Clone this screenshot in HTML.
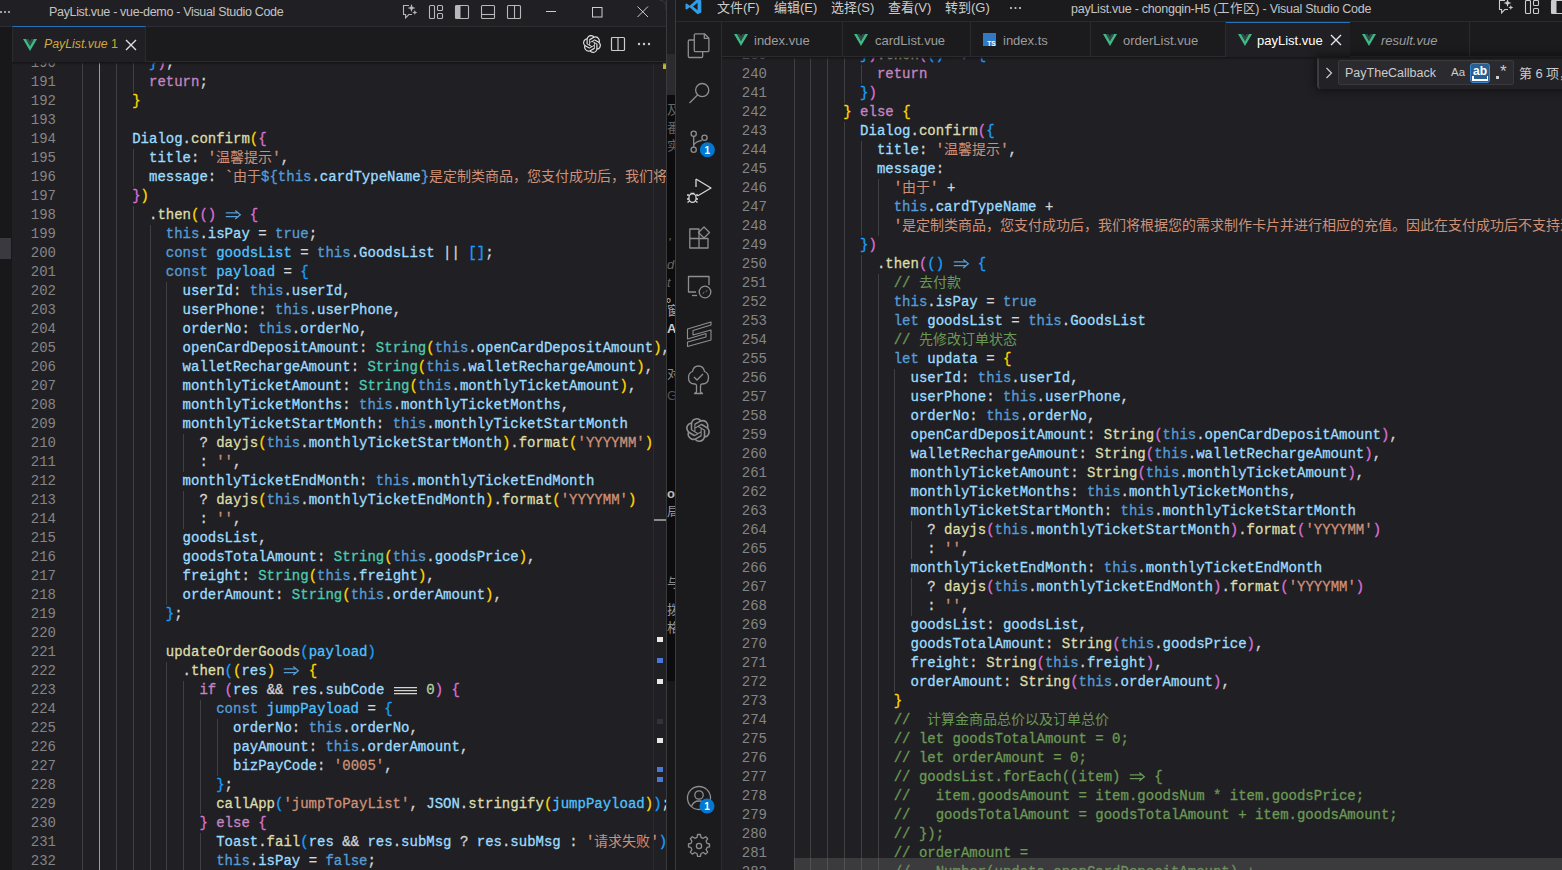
<!DOCTYPE html>
<html lang="zh-CN"><head><meta charset="utf-8">
<style>
*{box-sizing:border-box}
html,body{margin:0;padding:0}
body{width:1562px;height:870px;overflow:hidden;position:relative;background:#201f23;font-family:"Liberation Sans",sans-serif;color:#cccccc}
.a{position:absolute}
b,i{font-weight:normal;font-style:normal}
u{text-decoration:none;-webkit-text-stroke:0}
.c0{color:#179fff}
.c1{color:#da70d6}
.c2{color:#d4d4d4}
.c3{color:#c586c0}
.c4{color:#ffd700}
.c5{color:#9cdcfe}
.c6{color:#dcdcaa}
.c7{color:#ce9178}
.c8{color:#569cd6}
.c9{color:#4fc1ff}
.c10{color:#4ec9b0}
.c11{color:#b5cea8}
.c12{color:#6a9955}
.lig{display:inline-block;width:16.8px;height:19px;vertical-align:top;position:relative}
.lig svg{position:absolute;left:0;top:0}
.lig3{display:inline-block;width:25.2px;height:19px;vertical-align:top;position:relative}
.ed{position:absolute;overflow:hidden;background:#201f23}
.ln{position:absolute;left:0;width:44px;text-align:right;font-family:"Liberation Mono",monospace;font-size:14px;line-height:19px;height:19px;color:#858585;white-space:pre}
.cl{position:absolute;font-family:"Liberation Mono",monospace;font-size:14px;line-height:19px;height:19px;white-space:pre;color:#d4d4d4;-webkit-text-stroke:0.3px currentColor}
.g{position:absolute;width:1px;background:#404040}
.ga{position:absolute;width:1px;background:#b48cbb}
.tb{position:absolute;background:#1b1a1d}
.ttl{position:absolute;font-size:12px;color:#c4c4c4;white-space:nowrap}
.tab{position:absolute;font-size:13px;white-space:nowrap;color:#9d9d9d}
.sep{position:absolute;width:1px;background:#2b2a2e}
svg.i{position:absolute;overflow:visible}
.st{fill:none;stroke:#8e8e8e;stroke-width:1.2}
.stw{fill:none;stroke:#cccccc;stroke-width:1.1}
.mn{position:absolute;font-size:13px;color:#cccccc;white-space:nowrap}
</style></head><body>
<svg width="0" height="0" style="position:absolute">
 <defs>
  <symbol id="vue" viewBox="0 0 14 12"><path d="M0 0 L7 12 L14 0 H11 L7 7 L3 0 Z" fill="#41b883"/><path d="M3 0 L7 7 L11 0 H8.5 L7 2.6 L5.5 0 Z" fill="#2d4d4c"/></symbol>
  <symbol id="chat" viewBox="0 0 16 16"><path d="M7 1.5 H1.5 V10.5 H3.6 V13.8 L6.8 10.5 H10" fill="none" stroke="currentColor" stroke-width="1.1"/><path d="M9.5 0 L10.6 2.9 L13.5 4 L10.6 5.1 L9.5 8 L8.4 5.1 L5.5 4 L8.4 2.9 Z M12.8 6 L13.5 7.8 L15.3 8.5 L13.5 9.2 L12.8 11 L12.1 9.2 L10.3 8.5 L12.1 7.8 Z" fill="currentColor"/></symbol>
  <symbol id="layout" viewBox="0 0 16 16"><rect x="1.5" y="1.5" width="5" height="13" rx="1" fill="none" stroke="currentColor" stroke-width="1.1"/><rect x="9.5" y="1.5" width="5" height="5" rx="1" fill="none" stroke="currentColor" stroke-width="1.1"/><rect x="9.5" y="9.5" width="5" height="5" rx="1" fill="none" stroke="currentColor" stroke-width="1.1"/></symbol>
  <symbol id="sbl" viewBox="0 0 16 16"><rect x="1.5" y="1.5" width="13" height="13" rx="1" fill="none" stroke="currentColor" stroke-width="1.1"/><rect x="1.5" y="1.5" width="5" height="13" fill="currentColor"/></symbol>
  <symbol id="pnl" viewBox="0 0 16 16"><rect x="1.5" y="1.5" width="13" height="13" rx="1" fill="none" stroke="currentColor" stroke-width="1.1"/><path d="M1.5 10.5 H14.5" stroke="currentColor" stroke-width="1.1"/></symbol>
  <symbol id="sbr" viewBox="0 0 16 16"><rect x="1.5" y="1.5" width="13" height="13" rx="1" fill="none" stroke="currentColor" stroke-width="1.1"/><path d="M8.5 1.5 V14.5" stroke="currentColor" stroke-width="1.1"/></symbol>
  <symbol id="oai" viewBox="0 0 24 24"><path fill="currentColor" d="M22.28 9.82a5.98 5.98 0 0 0-.52-4.91 6.05 6.05 0 0 0-6.51-2.9A6.07 6.07 0 0 0 4.98 4.18a5.98 5.98 0 0 0-4 2.9 6.05 6.05 0 0 0 .74 7.1 5.98 5.98 0 0 0 .51 4.91 6.05 6.05 0 0 0 6.52 2.9A5.98 5.98 0 0 0 13.26 24a6.06 6.06 0 0 0 5.77-4.21 5.99 5.99 0 0 0 4-2.9 6.06 6.06 0 0 0-.75-7.07zM13.26 22.43a4.48 4.48 0 0 1-2.88-1.04l.14-.08 4.78-2.76a.8.8 0 0 0 .39-.68v-6.74l2.02 1.17a.07.07 0 0 1 .04.05v5.58a4.5 4.5 0 0 1-4.49 4.5zM3.6 18.3a4.47 4.47 0 0 1-.54-3.01l.14.09 4.78 2.76a.77.77 0 0 0 .78 0l5.84-3.37v2.33a.08.08 0 0 1-.03.06L9.74 19.95a4.5 4.5 0 0 1-6.14-1.65zM2.34 7.9a4.49 4.49 0 0 1 2.37-1.97v5.68a.77.77 0 0 0 .39.68l5.81 3.35-2.02 1.17a.08.08 0 0 1-.07 0l-4.83-2.79A4.5 4.5 0 0 1 2.34 7.87zm16.6 3.86-5.83-3.39L15.12 7.2a.08.08 0 0 1 .07 0l4.83 2.79a4.49 4.49 0 0 1-.68 8.1v-5.68a.79.79 0 0 0-.4-.67zm2.01-3.02-.14-.09-4.77-2.78a.78.78 0 0 0-.79 0L9.41 9.23V6.9a.07.07 0 0 1 .03-.06l4.83-2.79a4.5 4.5 0 0 1 6.68 4.66zM8.31 12.86 6.29 11.7a.08.08 0 0 1-.04-.06V6.08a4.5 4.5 0 0 1 7.38-3.45l-.14.08L8.7 5.47a.8.8 0 0 0-.39.68zm1.1-2.37 2.6-1.5 2.61 1.5v3l-2.6 1.5-2.61-1.5z"/></symbol>
 </defs>
</svg>

<!-- LEFT WINDOW -->
<div class="a" id="lw" style="left:0;top:0;width:666px;height:870px;overflow:hidden;background:#201f23;">
  <div class="tb" style="left:0;top:0;width:666px;height:27px;border-bottom:1px solid #2e2d31;background:#201f23"></div>
  <svg class="i" style="left:0;top:10px" width="12" height="4"><circle cx="1" cy="2" r="1.1" fill="#bbb"/><circle cx="5" cy="2" r="1.1" fill="#bbb"/><circle cx="9" cy="2" r="1.1" fill="#bbb"/></svg>
  <div class="ttl" style="left:49px;top:5px;font-size:12.5px;letter-spacing:-0.33px">PayList.vue - vue-demo - Visual Studio Code</div>
  <svg class="i" style="left:402px;top:4px;color:#b8b8b8" width="16" height="16"><use href="#chat"/></svg>
  <svg class="i" style="left:428px;top:4px;color:#b8b8b8" width="16" height="16"><use href="#layout"/></svg>
  <svg class="i" style="left:454px;top:4px;color:#b8b8b8" width="16" height="16"><use href="#sbl"/></svg>
  <svg class="i" style="left:480px;top:4px;color:#b8b8b8" width="16" height="16"><use href="#pnl"/></svg>
  <svg class="i" style="left:506px;top:4px;color:#b8b8b8" width="16" height="16"><use href="#sbr"/></svg>
  <svg class="i" style="left:545px;top:6px" width="12" height="12"><path d="M1 5.5 H11" stroke="#cccccc" stroke-width="1"/></svg>
  <svg class="i" style="left:591px;top:6px" width="12" height="12"><rect x="1.5" y="1.5" width="9.5" height="9.5" fill="none" stroke="#cccccc" stroke-width="1"/></svg>
  <svg class="i" style="left:637px;top:6px" width="12" height="12"><path d="M0.5 0.5 L11 11 M11 0.5 L0.5 11" stroke="#cccccc" stroke-width="1"/></svg>

  <div class="a" style="left:0;top:27px;width:12px;height:843px;background:#18171a"></div>
  <div class="a" style="left:0;top:238px;width:11px;height:21px;background:#3a393f"></div>
  <div class="tb" style="left:12px;top:27px;width:654px;height:35px;border-bottom:1px solid #2b2a2e;border-left:1px solid #2b2a2e"></div>
  <div class="a" style="left:12px;top:26px;width:134px;height:36px;background:#201f23;border-top:1px solid #2a72b5;border-right:1px solid #2b2a2e;border-left:1px solid #2b2a2e"></div>
  <svg class="i" style="left:23px;top:39px" width="14" height="12"><use href="#vue"/></svg>
  <div class="tab" style="left:44px;top:37px;font-size:12.3px;font-style:italic;color:#d0a93c">PayList.vue</div><div class="tab" style="left:111px;top:37px;font-size:12.5px;color:#cfa52e">1</div>
  <svg class="i" style="left:125px;top:39px" width="12" height="12"><path d="M1 1 L11 11 M11 1 L1 11" stroke="#e0e0e0" stroke-width="1.4"/></svg>
  <svg class="i" style="left:583px;top:35px;color:#e0e0e0" width="18" height="18"><use href="#oai"/></svg>
  <svg class="i" style="left:610px;top:36px;color:#cccccc" width="16" height="16"><rect x="1.5" y="1.5" width="13" height="13" rx="1" fill="none" stroke="currentColor" stroke-width="1.2"/><path d="M8 1.5 V14.5" stroke="currentColor" stroke-width="1.2"/></svg>
  <svg class="i" style="left:637px;top:42px" width="16" height="4"><circle cx="2" cy="2" r="1.2" fill="#ccc"/><circle cx="7" cy="2" r="1.2" fill="#ccc"/><circle cx="12" cy="2" r="1.2" fill="#ccc"/></svg>

  <div class="ed" style="left:12px;top:62px;width:654px;height:808px">
  <div class="a" style="left:0;top:0;width:654px;height:3px;background:linear-gradient(#141316,rgba(20,19,22,0));z-index:5"></div>
<div class="g" style="left:70.3px;top:-8.200000000000003px;height:836px"></div>
<div class="ga" style="left:87.1px;top:-8.200000000000003px;height:836px"></div>
<div class="g" style="left:103.9px;top:-8.200000000000003px;height:836px"></div>
<div class="g" style="left:120.7px;top:-8.200000000000003px;height:38px"></div>
<div class="g" style="left:120.7px;top:86.8px;height:38px"></div>
<div class="g" style="left:120.7px;top:143.8px;height:684px"></div>
<div class="g" style="left:137.5px;top:162.8px;height:665px"></div>
<div class="g" style="left:154.3px;top:219.8px;height:323px"></div>
<div class="g" style="left:154.3px;top:599.8px;height:228px"></div>
<div class="g" style="left:171.1px;top:371.8px;height:38px"></div>
<div class="g" style="left:171.1px;top:428.8px;height:38px"></div>
<div class="g" style="left:171.1px;top:618.8px;height:209px"></div>
<div class="g" style="left:187.9px;top:637.8px;height:114px"></div>
<div class="g" style="left:187.9px;top:770.8px;height:38px"></div>
<div class="g" style="left:204.7px;top:656.8px;height:57px"></div>
<div class="ln" style="top:-8.200000000000003px;width:44px">190</div>
<div class="cl" style="top:-8.200000000000003px;left:137.0px"><b class="c0">}</b><b class="c1">)</b><b class="c2">;</b></div>
<div class="ln" style="top:10.799999999999997px;width:44px">191</div>
<div class="cl" style="top:10.799999999999997px;left:137.0px"><b class="c3">return</b><b class="c2">;</b></div>
<div class="ln" style="top:29.799999999999997px;width:44px">192</div>
<div class="cl" style="top:29.799999999999997px;left:120.2px"><b class="c4">}</b></div>
<div class="ln" style="top:48.8px;width:44px">193</div>
<div class="cl" style="top:48.8px;left:69.8px"></div>
<div class="ln" style="top:67.8px;width:44px">194</div>
<div class="cl" style="top:67.8px;left:120.2px"><b class="c5">Dialog</b><b class="c2">.</b><b class="c6">confirm</b><b class="c4">(</b><b class="c1">{</b></div>
<div class="ln" style="top:86.8px;width:44px">195</div>
<div class="cl" style="top:86.8px;left:137.0px"><b class="c5">title</b><b class="c2">:</b> <b class="c7">&#x27;<u>温馨提示</u>&#x27;</b><b class="c2">,</b></div>
<div class="ln" style="top:105.8px;width:44px">196</div>
<div class="cl" style="top:105.8px;left:137.0px"><b class="c5">message</b><b class="c2">:</b> <b class="c7">`<u>由于</u></b><b class="c8">${</b><b class="c8">this</b><b class="c2">.</b><b class="c5">cardTypeName</b><b class="c8">}</b><b class="c7"><u>是定制类商品，您支付成功后，我们将根据您的需求制作卡片</u>`</b><b class="c2">,</b></div>
<div class="ln" style="top:124.8px;width:44px">197</div>
<div class="cl" style="top:124.8px;left:120.2px"><b class="c1">}</b><b class="c4">)</b></div>
<div class="ln" style="top:143.8px;width:44px">198</div>
<div class="cl" style="top:143.8px;left:137.0px"><b class="c2">.</b><b class="c6">then</b><b class="c4">(</b><b class="c1">(</b><b class="c1">)</b> <b class="lig"><svg width="17" height="19" style="color:#569cd6"><path d="M0.8 6.9 H12.5 M0.8 10.7 H12.5 M10.3 4.6 L15.3 8.8 L10.3 13" fill="none" stroke="currentColor" stroke-width="1.3"/></svg></b> <b class="c1">{</b></div>
<div class="ln" style="top:162.8px;width:44px">199</div>
<div class="cl" style="top:162.8px;left:153.8px"><b class="c8">this</b><b class="c2">.</b><b class="c5">isPay</b> <b class="c2">=</b> <b class="c8">true</b><b class="c2">;</b></div>
<div class="ln" style="top:181.8px;width:44px">200</div>
<div class="cl" style="top:181.8px;left:153.8px"><b class="c8">const</b> <b class="c9">goodsList</b> <b class="c2">=</b> <b class="c8">this</b><b class="c2">.</b><b class="c5">GoodsList</b> <b class="c2">|</b><b class="c2">|</b> <b class="c0">[</b><b class="c0">]</b><b class="c2">;</b></div>
<div class="ln" style="top:200.8px;width:44px">201</div>
<div class="cl" style="top:200.8px;left:153.8px"><b class="c8">const</b> <b class="c9">payload</b> <b class="c2">=</b> <b class="c0">{</b></div>
<div class="ln" style="top:219.8px;width:44px">202</div>
<div class="cl" style="top:219.8px;left:170.6px"><b class="c5">userId</b><b class="c2">:</b> <b class="c8">this</b><b class="c2">.</b><b class="c5">userId</b><b class="c2">,</b></div>
<div class="ln" style="top:238.8px;width:44px">203</div>
<div class="cl" style="top:238.8px;left:170.6px"><b class="c5">userPhone</b><b class="c2">:</b> <b class="c8">this</b><b class="c2">.</b><b class="c5">userPhone</b><b class="c2">,</b></div>
<div class="ln" style="top:257.8px;width:44px">204</div>
<div class="cl" style="top:257.8px;left:170.6px"><b class="c5">orderNo</b><b class="c2">:</b> <b class="c8">this</b><b class="c2">.</b><b class="c5">orderNo</b><b class="c2">,</b></div>
<div class="ln" style="top:276.8px;width:44px">205</div>
<div class="cl" style="top:276.8px;left:170.6px"><b class="c5">openCardDepositAmount</b><b class="c2">:</b> <b class="c10">String</b><b class="c4">(</b><b class="c8">this</b><b class="c2">.</b><b class="c5">openCardDepositAmount</b><b class="c4">)</b><b class="c2">,</b></div>
<div class="ln" style="top:295.8px;width:44px">206</div>
<div class="cl" style="top:295.8px;left:170.6px"><b class="c5">walletRechargeAmount</b><b class="c2">:</b> <b class="c10">String</b><b class="c4">(</b><b class="c8">this</b><b class="c2">.</b><b class="c5">walletRechargeAmount</b><b class="c4">)</b><b class="c2">,</b></div>
<div class="ln" style="top:314.8px;width:44px">207</div>
<div class="cl" style="top:314.8px;left:170.6px"><b class="c5">monthlyTicketAmount</b><b class="c2">:</b> <b class="c10">String</b><b class="c4">(</b><b class="c8">this</b><b class="c2">.</b><b class="c5">monthlyTicketAmount</b><b class="c4">)</b><b class="c2">,</b></div>
<div class="ln" style="top:333.8px;width:44px">208</div>
<div class="cl" style="top:333.8px;left:170.6px"><b class="c5">monthlyTicketMonths</b><b class="c2">:</b> <b class="c8">this</b><b class="c2">.</b><b class="c5">monthlyTicketMonths</b><b class="c2">,</b></div>
<div class="ln" style="top:352.8px;width:44px">209</div>
<div class="cl" style="top:352.8px;left:170.6px"><b class="c5">monthlyTicketStartMonth</b><b class="c2">:</b> <b class="c8">this</b><b class="c2">.</b><b class="c5">monthlyTicketStartMonth</b></div>
<div class="ln" style="top:371.8px;width:44px">210</div>
<div class="cl" style="top:371.8px;left:187.4px"><b class="c2">?</b> <b class="c6">dayjs</b><b class="c4">(</b><b class="c8">this</b><b class="c2">.</b><b class="c5">monthlyTicketStartMonth</b><b class="c4">)</b><b class="c2">.</b><b class="c6">format</b><b class="c4">(</b><b class="c7">&#x27;YYYYMM&#x27;</b><b class="c4">)</b></div>
<div class="ln" style="top:390.8px;width:44px">211</div>
<div class="cl" style="top:390.8px;left:187.4px"><b class="c2">:</b> <b class="c7">&#x27;&#x27;</b><b class="c2">,</b></div>
<div class="ln" style="top:409.8px;width:44px">212</div>
<div class="cl" style="top:409.8px;left:170.6px"><b class="c5">monthlyTicketEndMonth</b><b class="c2">:</b> <b class="c8">this</b><b class="c2">.</b><b class="c5">monthlyTicketEndMonth</b></div>
<div class="ln" style="top:428.8px;width:44px">213</div>
<div class="cl" style="top:428.8px;left:187.4px"><b class="c2">?</b> <b class="c6">dayjs</b><b class="c4">(</b><b class="c8">this</b><b class="c2">.</b><b class="c5">monthlyTicketEndMonth</b><b class="c4">)</b><b class="c2">.</b><b class="c6">format</b><b class="c4">(</b><b class="c7">&#x27;YYYYMM&#x27;</b><b class="c4">)</b></div>
<div class="ln" style="top:447.8px;width:44px">214</div>
<div class="cl" style="top:447.8px;left:187.4px"><b class="c2">:</b> <b class="c7">&#x27;&#x27;</b><b class="c2">,</b></div>
<div class="ln" style="top:466.8px;width:44px">215</div>
<div class="cl" style="top:466.8px;left:170.6px"><b class="c5">goodsList</b><b class="c2">,</b></div>
<div class="ln" style="top:485.8px;width:44px">216</div>
<div class="cl" style="top:485.8px;left:170.6px"><b class="c5">goodsTotalAmount</b><b class="c2">:</b> <b class="c10">String</b><b class="c4">(</b><b class="c8">this</b><b class="c2">.</b><b class="c5">goodsPrice</b><b class="c4">)</b><b class="c2">,</b></div>
<div class="ln" style="top:504.8px;width:44px">217</div>
<div class="cl" style="top:504.8px;left:170.6px"><b class="c5">freight</b><b class="c2">:</b> <b class="c10">String</b><b class="c4">(</b><b class="c8">this</b><b class="c2">.</b><b class="c5">freight</b><b class="c4">)</b><b class="c2">,</b></div>
<div class="ln" style="top:523.8px;width:44px">218</div>
<div class="cl" style="top:523.8px;left:170.6px"><b class="c5">orderAmount</b><b class="c2">:</b> <b class="c10">String</b><b class="c4">(</b><b class="c8">this</b><b class="c2">.</b><b class="c5">orderAmount</b><b class="c4">)</b><b class="c2">,</b></div>
<div class="ln" style="top:542.8px;width:44px">219</div>
<div class="cl" style="top:542.8px;left:153.8px"><b class="c0">}</b><b class="c2">;</b></div>
<div class="ln" style="top:561.8px;width:44px">220</div>
<div class="cl" style="top:561.8px;left:69.8px"></div>
<div class="ln" style="top:580.8px;width:44px">221</div>
<div class="cl" style="top:580.8px;left:153.8px"><b class="c6">updateOrderGoods</b><b class="c0">(</b><b class="c9">payload</b><b class="c0">)</b></div>
<div class="ln" style="top:599.8px;width:44px">222</div>
<div class="cl" style="top:599.8px;left:170.6px"><b class="c2">.</b><b class="c6">then</b><b class="c0">(</b><b class="c4">(</b><b class="c5">res</b><b class="c4">)</b> <b class="lig"><svg width="17" height="19" style="color:#569cd6"><path d="M0.8 6.9 H12.5 M0.8 10.7 H12.5 M10.3 4.6 L15.3 8.8 L10.3 13" fill="none" stroke="currentColor" stroke-width="1.3"/></svg></b> <b class="c4">{</b></div>
<div class="ln" style="top:618.8px;width:44px">223</div>
<div class="cl" style="top:618.8px;left:187.4px"><b class="c3">if</b> <b class="c1">(</b><b class="c5">res</b> <b class="c2">&amp;</b><b class="c2">&amp;</b> <b class="c5">res</b><b class="c2">.</b><b class="c5">subCode</b> <b class="lig3"><svg width="26" height="19"><path d="M1 6.7 H24 M1 9.7 H24 M1 12.7 H24" fill="none" stroke="#d4d4d4" stroke-width="1.2"/></svg></b> <b class="c11">0</b><b class="c1">)</b> <b class="c1">{</b></div>
<div class="ln" style="top:637.8px;width:44px">224</div>
<div class="cl" style="top:637.8px;left:204.2px"><b class="c8">const</b> <b class="c9">jumpPayload</b> <b class="c2">=</b> <b class="c0">{</b></div>
<div class="ln" style="top:656.8px;width:44px">225</div>
<div class="cl" style="top:656.8px;left:221.0px"><b class="c5">orderNo</b><b class="c2">:</b> <b class="c8">this</b><b class="c2">.</b><b class="c5">orderNo</b><b class="c2">,</b></div>
<div class="ln" style="top:675.8px;width:44px">226</div>
<div class="cl" style="top:675.8px;left:221.0px"><b class="c5">payAmount</b><b class="c2">:</b> <b class="c8">this</b><b class="c2">.</b><b class="c5">orderAmount</b><b class="c2">,</b></div>
<div class="ln" style="top:694.8px;width:44px">227</div>
<div class="cl" style="top:694.8px;left:221.0px"><b class="c5">bizPayCode</b><b class="c2">:</b> <b class="c7">&#x27;0005&#x27;</b><b class="c2">,</b></div>
<div class="ln" style="top:713.8px;width:44px">228</div>
<div class="cl" style="top:713.8px;left:204.2px"><b class="c0">}</b><b class="c2">;</b></div>
<div class="ln" style="top:732.8px;width:44px">229</div>
<div class="cl" style="top:732.8px;left:204.2px"><b class="c6">callApp</b><b class="c0">(</b><b class="c7">&#x27;jumpToPayList&#x27;</b><b class="c2">,</b> <b class="c5">JSON</b><b class="c2">.</b><b class="c6">stringify</b><b class="c4">(</b><b class="c9">jumpPayload</b><b class="c4">)</b><b class="c0">)</b><b class="c2">;</b></div>
<div class="ln" style="top:751.8px;width:44px">230</div>
<div class="cl" style="top:751.8px;left:187.4px"><b class="c1">}</b> <b class="c3">else</b> <b class="c1">{</b></div>
<div class="ln" style="top:770.8px;width:44px">231</div>
<div class="cl" style="top:770.8px;left:204.2px"><b class="c5">Toast</b><b class="c2">.</b><b class="c6">fail</b><b class="c0">(</b><b class="c5">res</b> <b class="c2">&amp;</b><b class="c2">&amp;</b> <b class="c5">res</b><b class="c2">.</b><b class="c5">subMsg</b> <b class="c2">?</b> <b class="c5">res</b><b class="c2">.</b><b class="c5">subMsg</b> <b class="c2">:</b> <b class="c7">&#x27;<u>请求失败</u>&#x27;</b><b class="c0">)</b><b class="c2">;</b></div>
<div class="ln" style="top:789.8px;width:44px">232</div>
<div class="cl" style="top:789.8px;left:204.2px"><b class="c8">this</b><b class="c2">.</b><b class="c5">isPay</b> <b class="c2">=</b> <b class="c8">false</b><b class="c2">;</b></div>
<div class="ln" style="top:808.8px;width:44px">233</div>
<div class="cl" style="top:808.8px;left:187.4px"><b class="c1">}</b></div>
  <div class="a" style="left:641px;top:0;width:1px;height:808px;background:#2b2a2e"></div>
  <div class="a" style="left:651px;top:1px;width:3px;height:6px;background:#c8b321"></div>
  <div class="a" style="left:642px;top:457px;width:12px;height:2px;background:#8a8a8a"></div>
  <div class="a" style="left:645px;top:575px;width:6px;height:5px;background:#e8e8e8"></div>
  <div class="a" style="left:645px;top:596px;width:6px;height:5px;background:#4a78d8"></div>
  <div class="a" style="left:645px;top:617px;width:6px;height:5px;background:#e8e8e8"></div>
  <div class="a" style="left:645px;top:657px;width:6px;height:5px;background:#333236"></div>
  <div class="a" style="left:645px;top:676px;width:6px;height:5px;background:#e8e8e8"></div>
  <div class="a" style="left:645px;top:705px;width:6px;height:5px;background:#4a78d8"></div>
  <div class="a" style="left:645px;top:715px;width:6px;height:5px;background:#4a78d8"></div>
  </div>
</div>

<!-- STRIP -->
<svg class="i" style="left:655px;top:0" width="12" height="10"><path d="M5 0.5 Q11 0.5 11 6 V10" fill="none" stroke="#3a393c" stroke-width="1"/></svg>
<div class="a" style="left:666px;top:0;width:10px;height:870px;background:#0c0b0d;border-left:1px solid #3a393c;border-right:1px solid #3a393c"></div>
<div class="a" style="left:667px;top:0;width:8px;height:54px;background:#1e1d21"></div>
<div class="a" style="left:667px;top:54px;width:8px;height:41px;background:#2b2a2e"></div>
<div class="a" style="left:667px;top:681px;width:8px;height:189px;background:#18171a"></div>
<div class="a" style="left:667px;top:95px;width:8px;height:586px;overflow:hidden;font-size:13px;line-height:18px;color:#666">
 <div class="a" style="left:0;top:6px">及</div><div class="a" style="left:0;top:24px">番</div><div class="a" style="left:0;top:42px">实</div>
 <div class="a" style="left:1px;top:139px;font-style:italic;color:#666">'</div><div class="a" style="left:0;top:161px;font-style:italic;color:#666">d</div><div class="a" style="left:0;top:179px;font-style:italic;color:#666">t</div>
 <div class="a" style="left:-1px;top:193px;color:#ccc">。</div><div class="a" style="left:0;top:207px;color:#aaa">窗</div><div class="a" style="left:0;top:225px;color:#ccc;font-weight:bold">A</div>
 <div class="a" style="left:0;top:270px;color:#888">对</div><div class="a" style="left:0;top:292px;color:#555">G</div>
 <div class="a" style="left:0;top:390px;color:#bbb;font-weight:bold">o</div><div class="a" style="left:0;top:408px;color:#999">局</div>
 <div class="a" style="left:0;top:479px;color:#888">与</div><div class="a" style="left:0;top:506px;color:#999">拨</div><div class="a" style="left:0;top:524px;color:#999">格</div>
</div>

<!-- RIGHT WINDOW -->
<div class="a" id="rw" style="left:676px;top:0;width:886px;height:870px;overflow:hidden;background:#201f23">
  <div class="tb" style="left:0;top:0;width:886px;height:22px;border-bottom:1px solid #2b2a2e"></div>
  <svg class="i" style="left:9px;top:-2px" width="17" height="17" viewBox="0 0 100 100"><path d="M74 4 L96 15 V85 L74 96 L28 54 L10 68 L3 64 V36 L10 32 L28 46 Z M74 28 L47 50 L74 72 Z" fill="#2e9ee8"/></svg>
  <div class="mn" style="left:41px;top:-3px">文件(F)</div>
  <div class="mn" style="left:98px;top:-3px">编辑(E)</div>
  <div class="mn" style="left:155px;top:-3px">选择(S)</div>
  <div class="mn" style="left:212px;top:-3px">查看(V)</div>
  <div class="mn" style="left:269px;top:-3px">转到(G)</div>
  <svg class="i" style="left:333px;top:6px" width="16" height="4"><circle cx="2" cy="2" r="1.1" fill="#ccc"/><circle cx="6.5" cy="2" r="1.1" fill="#ccc"/><circle cx="11" cy="2" r="1.1" fill="#ccc"/></svg>
  <div class="ttl" style="left:395px;top:-2px;font-size:12.5px;letter-spacing:-0.25px">payList.vue - chongqin-H5 (工作区) - Visual Studio Code</div>
  <svg class="i" style="left:822px;top:-1px;color:#cccccc" width="16" height="16"><use href="#chat"/></svg>
  <svg class="i" style="left:848px;top:-1px;color:#cccccc" width="16" height="16"><use href="#layout"/></svg>
  <svg class="i" style="left:874px;top:-1px;color:#cccccc" width="16" height="16"><use href="#sbl"/></svg>

  <div class="tb" style="left:0;top:22px;width:46px;height:848px;border-right:1px solid #2b2a2e"></div>
    <svg class="i" style="left:0;top:0" width="46" height="870">
   <g fill="none" stroke="#8e8e8e" stroke-width="1.3" stroke-linejoin="round">
    <!-- explorer -->
    <path d="M18 40 H13.5 Q12.3 40 12.3 41.2 V56.3 Q12.3 57.5 13.5 57.5 H25.5 Q26.7 57.5 26.7 56.3 V51.6"/>
    <path d="M19.5 33.8 H28.5 L32.9 38.2 V50.4 Q32.9 51.6 31.7 51.6 H19.5 Q18.3 51.6 18.3 50.4 V35 Q18.3 33.8 19.5 33.8 Z"/>
    <path d="M28.3 34 V38.3 H32.7"/>
    <!-- search -->
    <circle cx="26.2" cy="90.1" r="6.6"/>
    <path d="M21.5 95 L13.5 103"/>
    <!-- scm -->
    <circle cx="17.7" cy="133.7" r="2.6"/>
    <circle cx="17.7" cy="149.8" r="2.6"/>
    <circle cx="28.5" cy="137.7" r="2.6"/>
    <path d="M17.7 136.3 V147.2 M17.7 145 Q20 141.5 25.9 140.4"/>
    <!-- extensions -->
    <path d="M13.8 229 H23 V248 H13.8 Z M13.8 238.5 H32 V248 H23"/>
    <path d="M28 227 L33.5 232.5 L28 238 L22.5 232.5 Z"/>
    <!-- remote -->
    <path d="M20 292 H12.5 V276.5 H33 V285"/>
    <path d="M16 295.5 H21"/>
    <circle cx="29" cy="292" r="5.8"/>
    <path d="M26.7 293.5 L28.3 292.3 M31.3 290.5 L29.7 291.7" stroke-width="1"/>
    <!-- S -->
    <path d="M11.5 329 L35 322 V325 L17 330.5 V335 L35 330 V340 L11.5 346.5 V342 L30 337 V333.5 L11.5 339 Z" stroke-width="1.1"/>
    <!-- tree -->
    <path d="M19 384 Q12.5 384 12.5 377.5 Q12.5 373 16.5 371.5 Q17.5 366 22.5 366 Q27.5 366 28.5 371.5 Q32.5 373 32.5 377.5 Q32.5 384 26 384 Q24.5 384 24.5 386 V392 L26.5 393.5 H18.5 L20.5 392 V386 Q20.5 384 19 384 Z"/>
    <path d="M18 377 L21 380 L27 374"/>
    <!-- account -->
    <circle cx="23" cy="798" r="11.5"/>
    <circle cx="23" cy="795" r="4.2"/>
    <path d="M15.5 806.5 Q17.5 801 23 801 Q28.5 801 30.5 806.5"/>
    <!-- gear -->
    <circle cx="23" cy="846" r="2.6"/>
    <path d="M21.6 834.5 H24.4 L25 837.3 L27.2 838.3 L29.7 836.7 L31.7 838.7 L30.1 841.2 L31.1 843.4 L33.5 844 V846.8 L31.1 847.4 L30.1 849.6 L31.7 852.1 L29.7 854.1 L27.2 852.5 L25 853.5 L24.4 856.3 H21.6 L21 853.5 L18.8 852.5 L16.3 854.1 L14.3 852.1 L15.9 849.6 L14.9 847.4 L12.5 846.8 V844 L14.9 843.4 L15.9 841.2 L14.3 838.7 L16.3 836.7 L18.8 838.3 L21 837.3 Z"/>
   </g>
   <!-- debug -->
   <g fill="none" stroke="#d8d8d8" stroke-width="1.3" stroke-linejoin="round">
    <path d="M20 179 L35 188 L21.5 196"/>
    <path d="M20 179 V187"/>
    <ellipse cx="16.5" cy="198" rx="3.6" ry="4.4"/>
    <path d="M11 195 H13 M20 195 H22 M11 199 H13 M20 199 H22 M11.5 202.5 L13.5 201 M21.5 202.5 L19.5 201 M14.5 193.5 H18.5"/>
   </g>
   <g transform="translate(10 418) scale(1)" style="color:#8e8e8e"><use href="#oai" width="24" height="24"/></g>
   <!-- badges -->
   <circle cx="31.4" cy="149.8" r="7.5" fill="#0078d4"/>
   <text x="31.4" y="153.6" font-size="10" font-weight="bold" fill="#fff" text-anchor="middle" font-family="Liberation Sans">1</text>
   <circle cx="31" cy="806" r="7.5" fill="#0078d4"/>
   <text x="31" y="809.8" font-size="10" font-weight="bold" fill="#fff" text-anchor="middle" font-family="Liberation Sans">1</text>
  </svg>

  <div class="tb" style="left:46px;top:22px;width:840px;height:35px;border-bottom:1px solid #2b2a2e"></div>
    <div class="sep" style="left:166px;top:22px;height:34px"></div>
  <div class="sep" style="left:294px;top:22px;height:34px"></div>
  <div class="sep" style="left:414px;top:22px;height:34px"></div>
  <div class="sep" style="left:549px;top:22px;height:34px"></div>
  <div class="sep" style="left:673px;top:22px;height:34px"></div>
  <div class="sep" style="left:793px;top:22px;height:34px"></div>
  <div class="a" style="left:550px;top:22px;width:124px;height:36px;background:#201f23;border-top:1px solid #2a72b5"></div>
  <svg class="i" style="left:58px;top:34px" width="14" height="12"><use href="#vue"/></svg>
  <div class="tab" style="left:78px;top:33px">index.vue</div>
  <svg class="i" style="left:178px;top:34px" width="14" height="12"><use href="#vue"/></svg>
  <div class="tab" style="left:199px;top:33px">cardList.vue</div>
  <div class="a" style="left:307px;top:33px;width:13px;height:13px;background:#3178c6"><span style="position:absolute;right:0.5px;bottom:-1px;font-size:6.5px;font-weight:bold;color:#fff;font-family:'Liberation Sans'">TS</span></div>
  <div class="tab" style="left:327px;top:33px">index.ts</div>
  <svg class="i" style="left:427px;top:34px" width="14" height="12"><use href="#vue"/></svg>
  <div class="tab" style="left:447px;top:33px">orderList.vue</div>
  <svg class="i" style="left:562px;top:34px" width="14" height="12"><use href="#vue"/></svg>
  <div class="tab" style="left:581px;top:33px;color:#ffffff">payList.vue</div>
  <svg class="i" style="left:654px;top:34px" width="12" height="12"><path d="M1 1 L11 11 M11 1 L1 11" stroke="#e8e8e8" stroke-width="1.4"/></svg>
  <svg class="i" style="left:686px;top:34px" width="14" height="12"><use href="#vue"/></svg>
  <div class="tab" style="left:705px;top:33px;font-style:italic">result.vue</div>

  <div class="ed" style="left:46px;top:57px;width:840px;height:813px">
  <div class="a" style="left:0;top:0;width:840px;height:3px;background:linear-gradient(#141316,rgba(20,19,22,0));z-index:5"></div>
<div class="g" style="left:71.6px;top:-11.100000000000001px;height:836px"></div>
<div class="g" style="left:88.4px;top:-11.100000000000001px;height:836px"></div>
<div class="g" style="left:105.2px;top:-11.100000000000001px;height:836px"></div>
<div class="g" style="left:122.0px;top:-11.100000000000001px;height:57px"></div>
<div class="g" style="left:122.0px;top:64.9px;height:760px"></div>
<div class="g" style="left:138.8px;top:7.899999999999999px;height:19px"></div>
<div class="g" style="left:138.8px;top:83.9px;height:95px"></div>
<div class="g" style="left:138.8px;top:197.9px;height:627px"></div>
<div class="g" style="left:155.6px;top:121.9px;height:57px"></div>
<div class="g" style="left:155.6px;top:216.9px;height:608px"></div>
<div class="g" style="left:172.4px;top:311.9px;height:323px"></div>
<div class="g" style="left:189.2px;top:463.9px;height:38px"></div>
<div class="g" style="left:189.2px;top:520.9px;height:38px"></div>
<div class="ln" style="top:-11.100000000000001px;width:45px">239</div>
<div class="cl" style="top:-11.100000000000001px;left:138.1px"><b class="c0">}</b><b class="c1">)</b><b class="c2">.</b><b class="c6">then</b><b class="c1">(</b><b class="c0">(</b><b class="c0">)</b> <b class="lig"><svg width="17" height="19" style="color:#569cd6"><path d="M0.8 6.9 H12.5 M0.8 10.7 H12.5 M10.3 4.6 L15.3 8.8 L10.3 13" fill="none" stroke="currentColor" stroke-width="1.3"/></svg></b> <b class="c0">{</b></div>
<div class="ln" style="top:7.899999999999999px;width:45px">240</div>
<div class="cl" style="top:7.899999999999999px;left:154.9px"><b class="c3">return</b></div>
<div class="ln" style="top:26.9px;width:45px">241</div>
<div class="cl" style="top:26.9px;left:138.1px"><b class="c0">}</b><b class="c1">)</b></div>
<div class="ln" style="top:45.9px;width:45px">242</div>
<div class="cl" style="top:45.9px;left:121.3px"><b class="c4">}</b> <b class="c3">else</b> <b class="c4">{</b></div>
<div class="ln" style="top:64.9px;width:45px">243</div>
<div class="cl" style="top:64.9px;left:138.1px"><b class="c5">Dialog</b><b class="c2">.</b><b class="c6">confirm</b><b class="c1">(</b><b class="c0">{</b></div>
<div class="ln" style="top:83.9px;width:45px">244</div>
<div class="cl" style="top:83.9px;left:154.9px"><b class="c5">title</b><b class="c2">:</b> <b class="c7">&#x27;<u>温馨提示</u>&#x27;</b><b class="c2">,</b></div>
<div class="ln" style="top:102.9px;width:45px">245</div>
<div class="cl" style="top:102.9px;left:154.9px"><b class="c5">message</b><b class="c2">:</b></div>
<div class="ln" style="top:121.9px;width:45px">246</div>
<div class="cl" style="top:121.9px;left:171.7px"><b class="c7">&#x27;<u>由于</u>&#x27;</b> <b class="c2">+</b></div>
<div class="ln" style="top:140.9px;width:45px">247</div>
<div class="cl" style="top:140.9px;left:171.7px"><b class="c8">this</b><b class="c2">.</b><b class="c5">cardTypeName</b> <b class="c2">+</b></div>
<div class="ln" style="top:159.9px;width:45px">248</div>
<div class="cl" style="top:159.9px;left:171.7px"><b class="c7">&#x27;<u>是定制类商品，您支付成功后，我们将根据您的需求制作卡片并进行相应的充值。因此在支付成功后不支持退款</u>&#x27;</b><b class="c2">,</b></div>
<div class="ln" style="top:178.9px;width:45px">249</div>
<div class="cl" style="top:178.9px;left:138.1px"><b class="c0">}</b><b class="c1">)</b></div>
<div class="ln" style="top:197.9px;width:45px">250</div>
<div class="cl" style="top:197.9px;left:154.9px"><b class="c2">.</b><b class="c6">then</b><b class="c1">(</b><b class="c0">(</b><b class="c0">)</b> <b class="lig"><svg width="17" height="19" style="color:#569cd6"><path d="M0.8 6.9 H12.5 M0.8 10.7 H12.5 M10.3 4.6 L15.3 8.8 L10.3 13" fill="none" stroke="currentColor" stroke-width="1.3"/></svg></b> <b class="c0">{</b></div>
<div class="ln" style="top:216.9px;width:45px">251</div>
<div class="cl" style="top:216.9px;left:171.7px"><b class="c12">// <u>去付款</u></b></div>
<div class="ln" style="top:235.9px;width:45px">252</div>
<div class="cl" style="top:235.9px;left:171.7px"><b class="c8">this</b><b class="c2">.</b><b class="c5">isPay</b> <b class="c2">=</b> <b class="c8">true</b></div>
<div class="ln" style="top:254.9px;width:45px">253</div>
<div class="cl" style="top:254.9px;left:171.7px"><b class="c8">let</b> <b class="c5">goodsList</b> <b class="c2">=</b> <b class="c8">this</b><b class="c2">.</b><b class="c5">GoodsList</b></div>
<div class="ln" style="top:273.9px;width:45px">254</div>
<div class="cl" style="top:273.9px;left:171.7px"><b class="c12">// <u>先修改订单状态</u></b></div>
<div class="ln" style="top:292.9px;width:45px">255</div>
<div class="cl" style="top:292.9px;left:171.7px"><b class="c8">let</b> <b class="c5">updata</b> <b class="c2">=</b> <b class="c4">{</b></div>
<div class="ln" style="top:311.9px;width:45px">256</div>
<div class="cl" style="top:311.9px;left:188.5px"><b class="c5">userId</b><b class="c2">:</b> <b class="c8">this</b><b class="c2">.</b><b class="c5">userId</b><b class="c2">,</b></div>
<div class="ln" style="top:330.9px;width:45px">257</div>
<div class="cl" style="top:330.9px;left:188.5px"><b class="c5">userPhone</b><b class="c2">:</b> <b class="c8">this</b><b class="c2">.</b><b class="c5">userPhone</b><b class="c2">,</b></div>
<div class="ln" style="top:349.9px;width:45px">258</div>
<div class="cl" style="top:349.9px;left:188.5px"><b class="c5">orderNo</b><b class="c2">:</b> <b class="c8">this</b><b class="c2">.</b><b class="c5">orderNo</b><b class="c2">,</b></div>
<div class="ln" style="top:368.9px;width:45px">259</div>
<div class="cl" style="top:368.9px;left:188.5px"><b class="c5">openCardDepositAmount</b><b class="c2">:</b> <b class="c6">String</b><b class="c1">(</b><b class="c8">this</b><b class="c2">.</b><b class="c5">openCardDepositAmount</b><b class="c1">)</b><b class="c2">,</b></div>
<div class="ln" style="top:387.9px;width:45px">260</div>
<div class="cl" style="top:387.9px;left:188.5px"><b class="c5">walletRechargeAmount</b><b class="c2">:</b> <b class="c6">String</b><b class="c1">(</b><b class="c8">this</b><b class="c2">.</b><b class="c5">walletRechargeAmount</b><b class="c1">)</b><b class="c2">,</b></div>
<div class="ln" style="top:406.9px;width:45px">261</div>
<div class="cl" style="top:406.9px;left:188.5px"><b class="c5">monthlyTicketAmount</b><b class="c2">:</b> <b class="c6">String</b><b class="c1">(</b><b class="c8">this</b><b class="c2">.</b><b class="c5">monthlyTicketAmount</b><b class="c1">)</b><b class="c2">,</b></div>
<div class="ln" style="top:425.9px;width:45px">262</div>
<div class="cl" style="top:425.9px;left:188.5px"><b class="c5">monthlyTicketMonths</b><b class="c2">:</b> <b class="c8">this</b><b class="c2">.</b><b class="c5">monthlyTicketMonths</b><b class="c2">,</b></div>
<div class="ln" style="top:444.9px;width:45px">263</div>
<div class="cl" style="top:444.9px;left:188.5px"><b class="c5">monthlyTicketStartMonth</b><b class="c2">:</b> <b class="c8">this</b><b class="c2">.</b><b class="c5">monthlyTicketStartMonth</b></div>
<div class="ln" style="top:463.9px;width:45px">264</div>
<div class="cl" style="top:463.9px;left:205.3px"><b class="c2">?</b> <b class="c6">dayjs</b><b class="c1">(</b><b class="c8">this</b><b class="c2">.</b><b class="c5">monthlyTicketStartMonth</b><b class="c1">)</b><b class="c2">.</b><b class="c6">format</b><b class="c1">(</b><b class="c7">&#x27;YYYYMM&#x27;</b><b class="c1">)</b></div>
<div class="ln" style="top:482.9px;width:45px">265</div>
<div class="cl" style="top:482.9px;left:205.3px"><b class="c2">:</b> <b class="c7">&#x27;&#x27;</b><b class="c2">,</b></div>
<div class="ln" style="top:501.9px;width:45px">266</div>
<div class="cl" style="top:501.9px;left:188.5px"><b class="c5">monthlyTicketEndMonth</b><b class="c2">:</b> <b class="c8">this</b><b class="c2">.</b><b class="c5">monthlyTicketEndMonth</b></div>
<div class="ln" style="top:520.9px;width:45px">267</div>
<div class="cl" style="top:520.9px;left:205.3px"><b class="c2">?</b> <b class="c6">dayjs</b><b class="c1">(</b><b class="c8">this</b><b class="c2">.</b><b class="c5">monthlyTicketEndMonth</b><b class="c1">)</b><b class="c2">.</b><b class="c6">format</b><b class="c1">(</b><b class="c7">&#x27;YYYYMM&#x27;</b><b class="c1">)</b></div>
<div class="ln" style="top:539.9px;width:45px">268</div>
<div class="cl" style="top:539.9px;left:205.3px"><b class="c2">:</b> <b class="c7">&#x27;&#x27;</b><b class="c2">,</b></div>
<div class="ln" style="top:558.9px;width:45px">269</div>
<div class="cl" style="top:558.9px;left:188.5px"><b class="c5">goodsList</b><b class="c2">:</b> <b class="c5">goodsList</b><b class="c2">,</b></div>
<div class="ln" style="top:577.9px;width:45px">270</div>
<div class="cl" style="top:577.9px;left:188.5px"><b class="c5">goodsTotalAmount</b><b class="c2">:</b> <b class="c6">String</b><b class="c1">(</b><b class="c8">this</b><b class="c2">.</b><b class="c5">goodsPrice</b><b class="c1">)</b><b class="c2">,</b></div>
<div class="ln" style="top:596.9px;width:45px">271</div>
<div class="cl" style="top:596.9px;left:188.5px"><b class="c5">freight</b><b class="c2">:</b> <b class="c6">String</b><b class="c1">(</b><b class="c8">this</b><b class="c2">.</b><b class="c5">freight</b><b class="c1">)</b><b class="c2">,</b></div>
<div class="ln" style="top:615.9px;width:45px">272</div>
<div class="cl" style="top:615.9px;left:188.5px"><b class="c5">orderAmount</b><b class="c2">:</b> <b class="c6">String</b><b class="c1">(</b><b class="c8">this</b><b class="c2">.</b><b class="c5">orderAmount</b><b class="c1">)</b><b class="c2">,</b></div>
<div class="ln" style="top:634.9px;width:45px">273</div>
<div class="cl" style="top:634.9px;left:171.7px"><b class="c4">}</b></div>
<div class="ln" style="top:653.9px;width:45px">274</div>
<div class="cl" style="top:653.9px;left:171.7px"><b class="c12">//  <u>计算金商品总价以及订单总价</u></b></div>
<div class="ln" style="top:672.9px;width:45px">275</div>
<div class="cl" style="top:672.9px;left:171.7px"><b class="c12">// let goodsTotalAmount = 0;</b></div>
<div class="ln" style="top:691.9px;width:45px">276</div>
<div class="cl" style="top:691.9px;left:171.7px"><b class="c12">// let orderAmount = 0;</b></div>
<div class="ln" style="top:710.9px;width:45px">277</div>
<div class="cl" style="top:710.9px;left:171.7px"><b class="c12">// goodsList.forEach((item) </b><b class="lig"><svg width="17" height="19" style="color:#6a9955"><path d="M0.8 6.9 H12.5 M0.8 10.7 H12.5 M10.3 4.6 L15.3 8.8 L10.3 13" fill="none" stroke="currentColor" stroke-width="1.3"/></svg></b><b class="c12"> {</b></div>
<div class="ln" style="top:729.9px;width:45px">278</div>
<div class="cl" style="top:729.9px;left:171.7px"><b class="c12">//   item.goodsAmount = item.goodsNum * item.goodsPrice;</b></div>
<div class="ln" style="top:748.9px;width:45px">279</div>
<div class="cl" style="top:748.9px;left:171.7px"><b class="c12">//   goodsTotalAmount = goodsTotalAmount + item.goodsAmount;</b></div>
<div class="ln" style="top:767.9px;width:45px">280</div>
<div class="cl" style="top:767.9px;left:171.7px"><b class="c12">// });</b></div>
<div class="ln" style="top:786.9px;width:45px">281</div>
<div class="cl" style="top:786.9px;left:171.7px"><b class="c12">// orderAmount =</b></div>
<div class="ln" style="top:805.9px;width:45px">282</div>
<div class="cl" style="top:805.9px;left:171.7px"><b class="c12">//   Number(updata.openCardDepositAmount) +</b></div>
  <div class="a" style="left:71.5px;top:801px;width:800px;height:12px;background:rgba(121,121,121,0.3)"></div>
  </div>
    <div class="a" style="left:641px;top:57px;width:260px;height:32px;background:#222125;box-shadow:0 0 8px 2px rgba(0,0,0,0.45);border-left:2px solid #3c3b40;border-bottom-left-radius:4px"></div>
  <svg class="i" style="left:648px;top:67px" width="10" height="12"><path d="M2.5 1 L7.5 6 L2.5 11" fill="none" stroke="#cccccc" stroke-width="1.2"/></svg>
  <div class="a" style="left:662px;top:60px;width:176px;height:25px;background:#2b2a2e;border:1px solid #39383c;border-radius:2px"></div>
  <div class="a" style="left:669px;top:66px;font-size:12.5px;color:#cccccc">PayTheCallback</div>
  <div class="a" style="left:775px;top:66px;font-size:11.5px;color:#cccccc">Aa</div>
  <div class="a" style="left:794px;top:63px;width:20px;height:20px;background:#2b5f90;border:1px solid #3a88d4;border-radius:3px"></div>
  <div class="a" style="left:797px;top:64px;font-size:12px;font-weight:bold;color:#ffffff">ab</div><div class="a" style="left:796px;top:79px;width:16px;height:1.5px;background:#fff"></div><div class="a" style="left:796px;top:76px;width:1.5px;height:4px;background:#fff"></div><div class="a" style="left:810.5px;top:76px;width:1.5px;height:4px;background:#fff"></div>
  <div class="a" style="left:820px;top:76px;width:3px;height:3px;background:#cccccc"></div><div class="a" style="left:824px;top:62px;font-size:17px;color:#cccccc">*</div>
  <div class="a" style="left:843px;top:63px;font-size:13px;color:#cccccc;white-space:nowrap">第 6 项，共</div>

</div>

</body></html>
